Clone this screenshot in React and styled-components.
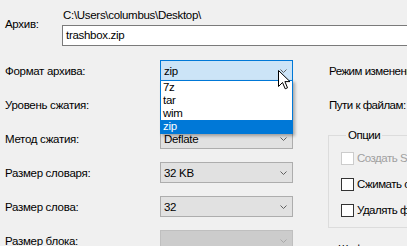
import React from 'react';
import styled, { createGlobalStyle } from 'styled-components';

const GlobalStyle = createGlobalStyle`
  html, body {
    margin: 0;
    background: #f0f0f0;
    overflow: hidden;
  }
  body {
    font-family: "Liberation Sans", Arial, sans-serif;
    font-size: 11.5px;
    letter-spacing: -0.3px;
    color: #000;
  }
`;

const Window = styled.div`
  position: relative;
  width: 407px;
  height: 246px;
  overflow: hidden;
  padding-left: 5px;
  box-sizing: border-box;
`;

const ArchiveRow = styled.div`
  display: flex;
  align-items: flex-start;
  padding-top: 8px;
`;

const ArchiveLabel = styled.div`
  width: 57px;
  flex: none;
  margin-top: 9px;
  line-height: 14px;
`;

const PathBlock = styled.div`
  display: flex;
  flex-direction: column;
`;

const PathText = styled.div`
  line-height: 14px;
  padding-left: 1px;
`;

const TextInput = styled.div`
  margin-top: 3px;
  width: 380px;
  height: 21px;
  box-sizing: border-box;
  border: 1px solid #7a7a7a;
  background: #fff;
  padding-left: 3px;
  line-height: 19px;
`;

const Main = styled.div`
  display: flex;
  margin-top: 14px;
`;

const Fields = styled.div`
  display: grid;
  grid-template-columns: 155px 133px;
  grid-auto-rows: 21px;
  row-gap: 13px;
`;

const Label = styled.div`
  align-self: center;
  line-height: 14px;
  padding-top: 1px;
`;

const Combo = styled.div`
  position: relative;
  display: flex;
  align-items: center;
  justify-content: space-between;
  box-sizing: border-box;
  height: 21px;
  padding: 0 5px 0 3px;
  border: 1px solid ${p => (p.$open ? '#0078d7' : p.$disabled ? '#bfbfbf' : '#adadad')};
  background: ${p => (p.$open ? '#cce4f7' : p.$disabled ? '#cccccc' : '#e1e1e1')};
`;

const Chevron = styled.svg`
  width: 7px;
  height: 4px;
  flex: none;
`;

const DropList = styled.ul`
  position: absolute;
  top: 100%;
  left: -1px;
  right: -1px;
  margin: 0;
  padding: 0;
  list-style: none;
  background: #fff;
  border: 1px solid #0078d7;
  box-shadow: 2px 2px 3px rgba(0, 0, 0, 0.3);
  z-index: 2;
`;

const DropItem = styled.li`
  height: 13px;
  line-height: 13px;
  padding-left: 2px;
  background: ${p => (p.$active ? '#0078d7' : 'transparent')};
  color: ${p => (p.$active ? '#fff' : '#000')};
`;

const RightCol = styled.div`
  display: grid;
  grid-auto-rows: min-content;
  row-gap: 13px;
  margin-left: 35px;
  width: 120px;
  letter-spacing: -0.5px;
`;

const RightLabel = styled.div`
  height: 21px;
  display: flex;
  align-items: center;
  white-space: nowrap;
  padding-left: 1px;
`;

const Group = styled.fieldset`
  margin: 0;
  border: 1px solid #dcdcdc;
  border-right: none;
  padding: 8px 0 9px 12px;
  display: grid;
  grid-auto-rows: 16px;
  row-gap: 10px;
`;

const Legend = styled.legend`
  padding: 0 2px;
  margin-left: 5px;
  line-height: 14px;
`;

const CheckRow = styled.label`
  display: flex;
  align-items: center;
  gap: 3px;
  white-space: nowrap;
  color: ${p => (p.$disabled ? '#a0a0a0' : '#000')};
`;

const Box = styled.span`
  width: 13px;
  height: 13px;
  box-sizing: border-box;
  flex: none;
  background: #fff;
  border: 1px solid ${p => (p.$disabled ? '#cccccc' : '#333333')};
`;

const NextGroup = styled.div`
  margin-top: 1px;
  padding-left: 10px;
  line-height: 14px;
`;

const Cursor = styled.svg`
  position: absolute;
  left: 278px;
  top: 70px;
  width: 13px;
  height: 20px;
  z-index: 3;
`;

const ChevronIcon = ({ color = '#606060' }) => (
  <Chevron viewBox="0 0 7 4">
    <path d="M0.5 0.5 L3.5 3.5 L6.5 0.5" fill="none" stroke={color} strokeWidth="1" />
  </Chevron>
);

const rows = [
  { label: 'Формат архива:', value: 'zip', open: true },
  { label: 'Уровень сжатия:', value: '' },
  { label: 'Метод сжатия:', value: 'Deflate' },
  { label: 'Размер словаря:', value: '32 KB' },
  { label: 'Размер слова:', value: '32' },
  { label: 'Размер блока:', value: '', disabled: true },
];

const formats = ['7z', 'tar', 'wim', 'zip'];

export default function App() {
  return (
    <Window>
      <GlobalStyle />
      <ArchiveRow>
        <ArchiveLabel>Архив:</ArchiveLabel>
        <PathBlock>
          <PathText>C:\Users\columbus\Desktop\</PathText>
          <TextInput>trashbox.zip</TextInput>
        </PathBlock>
      </ArchiveRow>

      <Main>
        <Fields>
          {rows.map(r => (
            <React.Fragment key={r.label}>
              <Label>{r.label}</Label>
              <Combo $open={r.open} $disabled={r.disabled}>
                <span>{r.value}</span>
                <ChevronIcon color={r.disabled ? '#a8a8a8' : '#606060'} />
                {r.open && (
                  <DropList>
                    {formats.map(f => (
                      <DropItem key={f} $active={f === r.value}>{f}</DropItem>
                    ))}
                  </DropList>
                )}
              </Combo>
            </React.Fragment>
          ))}
        </Fields>

        <RightCol>
          <RightLabel>Режим изменения:</RightLabel>
          <RightLabel>Пути к файлам:</RightLabel>
          <Group>
            <Legend>Опции</Legend>
            <CheckRow $disabled><Box $disabled />Создать SFX-архив</CheckRow>
            <CheckRow><Box />Сжимать открытые файлы</CheckRow>
            <CheckRow><Box />Удалять файлы после сжатия</CheckRow>
          </Group>
          <NextGroup>Шифрование</NextGroup>
        </RightCol>
      </Main>

      <Cursor viewBox="0 0 13 20">
        <path
          d="M0.5 0.5 L0.5 16.5 L4.5 12.5 L7.2 18.8 L9.5 17.8 L6.9 11.6 L12 11.6 Z"
          fill="#fff"
          stroke="#000"
          strokeWidth="1"
          strokeLinejoin="miter"
        />
      </Cursor>
    </Window>
  );
}
